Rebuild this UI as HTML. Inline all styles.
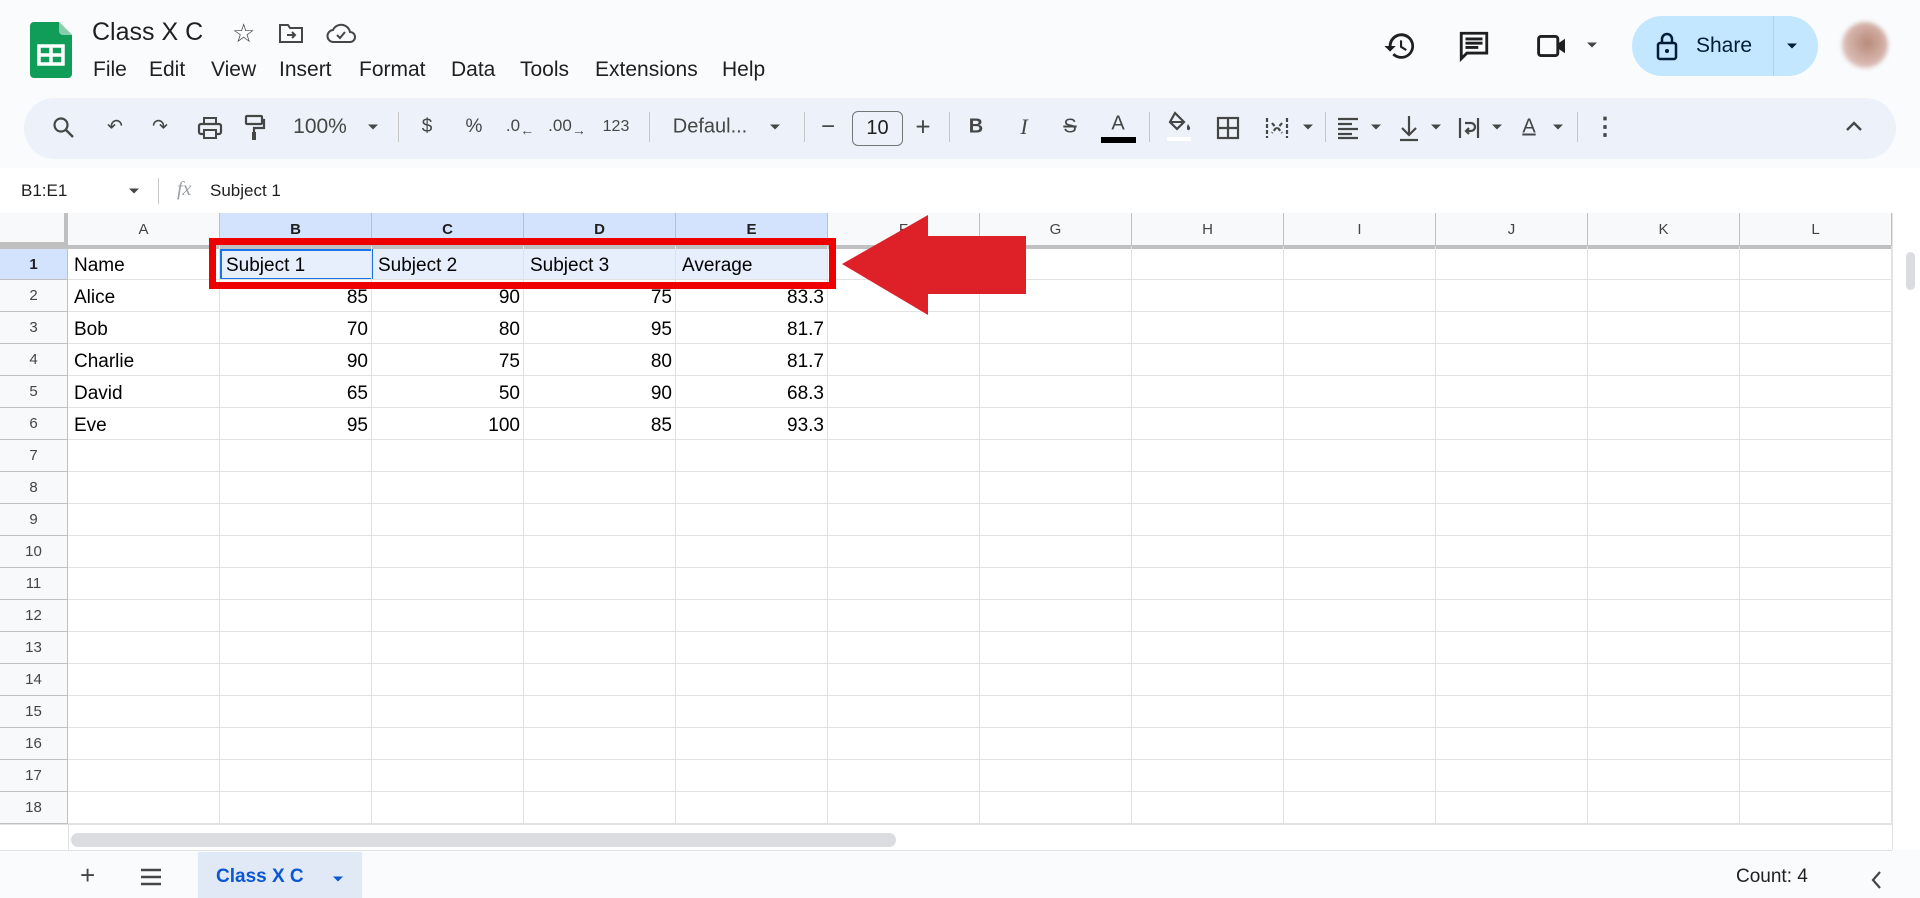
<!DOCTYPE html>
<html><head><meta charset="utf-8"><style>
*{margin:0;padding:0;box-sizing:border-box}
body{width:1920px;height:898px;overflow:hidden;background:#f9fbfd;font-family:"Liberation Sans",Arial,sans-serif;color:#1f1f1f;position:relative}
.a{position:absolute}
.m{position:absolute;top:58px;font-size:21px;color:#1f1f1f}
.ti{position:absolute;top:127px;transform:translate(-50%,-50%);font-size:19px;color:#444746;white-space:nowrap}
.dd{position:absolute;top:127px;transform:translate(-50%,-50%);width:0;height:0;border-left:5px solid transparent;border-right:5px solid transparent;border-top:5px solid #444746}
.sep{position:absolute;top:112px;width:1px;height:30px;background:#c7c7c7}
.ch{position:absolute;top:213px;height:33px;border-right:1px solid #c0c0c0;border-bottom:1px solid #c0c0c0;font-size:15px;color:#444;text-align:center;line-height:33px;background:#f8f9fa}
.rh{position:absolute;left:0;width:68px;border-bottom:1px solid #c0c0c0;border-right:1px solid #c0c0c0;font-size:15px;color:#444;text-align:center;background:#f8f9fa}
.hl{position:absolute;left:68px;width:1824px;height:1px;background:#e2e2e2}
.vl{position:absolute;top:246px;height:578px;width:1px;background:#e2e2e2}
.c{position:absolute;font-size:19px;color:#000;white-space:nowrap}
.r{text-align:right;width:146px}
</style></head><body>
<div class="a" style="left:0;top:0;width:1920px;height:168px;background:#f9fbfd"></div>
<svg class="a" style="left:30px;top:22px" width="42" height="56" viewBox="0 0 42 56"><path d="M4 0h25l13 13v39a4 4 0 0 1-4 4H4a4 4 0 0 1-4-4V4a4 4 0 0 1 4-4z" fill="#0f9d58"/><path d="M29 0l13 13H33a4 4 0 0 1-4-4z" fill="#87ceac"/><rect x="9" y="24" width="24" height="18" fill="none" stroke="#fff" stroke-width="3.5"/><path d="M21 24v18M9 33h24" stroke="#fff" stroke-width="3.5"/></svg>
<div class="a" style="left:92px;top:18px;font-size:25px;color:#1f1f1f">Class X C</div>
<div class="a" style="left:232px;top:18px;font-size:26px;color:#444746">☆</div>
<svg class="a" style="left:278px;top:22px" width="26" height="22" viewBox="0 0 26 22"><path d="M2 3h8l2 3h12v14H2z" fill="none" stroke="#444746" stroke-width="2"/><path d="M9 13h8M14 10l3 3-3 3" fill="none" stroke="#444746" stroke-width="2"/></svg>
<svg class="a" style="left:326px;top:22px" width="30" height="22" viewBox="0 0 30 22"><path d="M8 20a6 6 0 0 1-1-12 9 9 0 0 1 17 2 5 5 0 0 1 0 10z" fill="none" stroke="#444746" stroke-width="2"/><path d="M11 13l3 3 5-6" fill="none" stroke="#444746" stroke-width="2"/></svg>
<div class="m" style="left:93px">File</div>
<div class="m" style="left:149px">Edit</div>
<div class="m" style="left:211px">View</div>
<div class="m" style="left:279px">Insert</div>
<div class="m" style="left:359px">Format</div>
<div class="m" style="left:451px">Data</div>
<div class="m" style="left:520px">Tools</div>
<div class="m" style="left:595px">Extensions</div>
<div class="m" style="left:722px">Help</div>
<svg class="a" style="left:1383px;top:29px" width="34" height="34" viewBox="0 0 24 24"><path d="M13 3a9 9 0 0 0-9 9H1l4 4 4-4H6a7 7 0 1 1 2 5l-1.4 1.4A9 9 0 1 0 13 3zm-1 5v5l4 2.5.8-1.3-3.3-2V8z" fill="#1f1f1f"/></svg>
<svg class="a" style="left:1457px;top:29px" width="34" height="34" viewBox="0 0 24 24"><path d="M3 3h18v14H7l-4 4zM6 7h12M6 10h12M6 13h9" fill="none" stroke="#1f1f1f" stroke-width="2"/></svg>
<svg class="a" style="left:1535px;top:31px" width="36" height="30" viewBox="0 0 30 24"><rect x="3" y="4" width="16" height="16" rx="2" fill="none" stroke="#1f1f1f" stroke-width="2.4"/><path d="M19 10l6-4v12l-6-4z" fill="#1f1f1f"/></svg>
<div class="dd" style="left:1592px;top:45px"></div>
<div class="a" style="left:1632px;top:16px;width:186px;height:60px;border-radius:30px;background:#c2e7ff"></div>
<div class="a" style="left:1773px;top:16px;width:1px;height:60px;background:#a8d4f2"></div>
<svg class="a" style="left:1656px;top:31px" width="22" height="30" viewBox="0 0 22 30"><rect x="2" y="12" width="18" height="16" rx="2" fill="none" stroke="#001d35" stroke-width="2.5"/><path d="M6 12V8a5 5 0 0 1 10 0v4" fill="none" stroke="#001d35" stroke-width="2.5"/><circle cx="11" cy="20" r="2" fill="#001d35"/></svg>
<div class="a" style="left:1696px;top:34px;font-size:21px;color:#001d35">Share</div>
<div class="dd" style="left:1792px;top:46px;border-top-color:#001d35"></div>
<div class="a" style="left:1842px;top:22px;width:46px;height:46px;border-radius:50%;background:radial-gradient(circle at 55% 45%,#b88a78,#d8b8b0 60%,#f0e6e6);filter:blur(2px)"></div>
<div class="a" style="left:24px;top:98px;width:1872px;height:61px;border-radius:31px;background:#edf2fa"></div>
<svg class="a" style="left:52px;top:116px" width="24" height="24" viewBox="0 0 24 24"><circle cx="9" cy="9" r="6.5" fill="none" stroke="#444746" stroke-width="2.2"/><path d="M14 14l7 7" stroke="#444746" stroke-width="2.4"/></svg>
<div class="ti" style="left:115px">↶</div>
<div class="ti" style="left:160px">↷</div>
<svg class="a" style="left:197px;top:116px" width="26" height="24" viewBox="0 0 26 24"><rect x="2" y="8" width="22" height="10" rx="2" fill="none" stroke="#444746" stroke-width="2.2"/><rect x="7" y="2" width="12" height="6" fill="none" stroke="#444746" stroke-width="2"/><rect x="7" y="14" width="12" height="8" fill="#edf2fa" stroke="#444746" stroke-width="2"/></svg>
<svg class="a" style="left:244px;top:114px" width="22" height="28" viewBox="0 0 22 28"><rect x="2" y="2" width="16" height="8" rx="1" fill="none" stroke="#444746" stroke-width="2.2"/><path d="M18 6h2v8H10v4" fill="none" stroke="#444746" stroke-width="2.2"/><rect x="8" y="18" width="4" height="8" fill="#444746"/></svg>
<div class="ti" style="left:320px;font-size:21px">100%</div>
<div class="dd" style="left:373px"></div>
<div class="sep" style="left:398px"></div>
<div class="ti" style="left:427px">$</div>
<div class="ti" style="left:474px">%</div>
<div class="ti" style="left:520px;font-size:17px">.0<sub style="font-size:14px">←</sub></div>
<div class="ti" style="left:567px;font-size:17px">.00<sub style="font-size:14px">→</sub></div>
<div class="ti" style="left:616px;font-size:16px">123</div>
<div class="sep" style="left:649px"></div>
<div class="ti" style="left:710px;font-size:20px">Defaul...</div>
<div class="dd" style="left:775px"></div>
<div class="sep" style="left:804px"></div>
<div class="ti" style="left:828px;font-size:24px">−</div>
<div class="a" style="left:852px;top:111px;width:51px;height:35px;border:1px solid #747775;border-radius:6px;font-size:20px;text-align:center;line-height:33px;color:#1f1f1f">10</div>
<div class="ti" style="left:923px;font-size:26px">+</div>
<div class="sep" style="left:949px"></div>
<div class="ti" style="left:976px;font-weight:bold;font-size:20px">B</div>
<div class="ti" style="left:1024px;font-style:italic;font-family:'Liberation Serif',serif;font-size:22px">I</div>
<div class="ti" style="left:1070px;text-decoration:line-through;font-size:20px">S</div>
<div class="ti" style="left:1118px;top:124px;font-size:20px">A</div>
<div class="a" style="left:1101px;top:137px;width:35px;height:6px;background:#000"></div>
<div class="sep" style="left:1149px"></div>
<svg class="a" style="left:1165px;top:110px" width="28" height="32" viewBox="0 0 28 32"><path d="M10 3l9 9-7 7-7-7z" fill="none" stroke="#444746" stroke-width="2.2"/><path d="M5 12h14" stroke="#444746" stroke-width="2"/><path d="M23 14c2 3 3 5 1 6s-3-2-1-6z" fill="#444746"/><rect x="2" y="27" width="24" height="4" fill="#fff"/></svg>
<svg class="a" style="left:1216px;top:116px" width="24" height="24" viewBox="0 0 24 24"><rect x="2" y="2" width="20" height="20" fill="none" stroke="#444746" stroke-width="2.2"/><path d="M12 2v20M2 12h20" stroke="#444746" stroke-width="2.2"/></svg>
<svg class="a" style="left:1264px;top:115px" width="26" height="26" viewBox="0 0 26 26"><path d="M3 3v20M23 3v20M8 8l4 5-4 5M18 8l-4 5 4 5" fill="none" stroke="#444746" stroke-width="2.2" stroke-dasharray="4 2"/></svg>
<div class="dd" style="left:1308px"></div>
<div class="sep" style="left:1325px"></div>
<svg class="a" style="left:1337px;top:116px" width="22" height="24" viewBox="0 0 22 24"><path d="M1 3h20M1 8h14M1 13h20M1 18h14M1 22h20" stroke="#444746" stroke-width="2.2"/></svg>
<div class="dd" style="left:1376px"></div>
<svg class="a" style="left:1398px;top:114px" width="22" height="28" viewBox="0 0 22 28"><path d="M11 2v19M4 14l7 7 7-7M2 26h18" fill="none" stroke="#444746" stroke-width="2.2"/></svg>
<div class="dd" style="left:1436px"></div>
<svg class="a" style="left:1457px;top:115px" width="24" height="26" viewBox="0 0 24 26"><path d="M3 3v20M21 3v20M8 8h6a4 4 0 0 1 0 8H9m3-3l-3 3 3 3" fill="none" stroke="#444746" stroke-width="2.2"/></svg>
<div class="dd" style="left:1497px"></div>
<div class="ti" style="left:1529px;font-size:20px;text-decoration:underline">A</div>
<div class="dd" style="left:1558px"></div>
<div class="sep" style="left:1577px"></div>
<div class="ti" style="left:1605px;font-size:24px;font-weight:bold">⋮</div>
<svg class="a" style="left:1845px;top:120px" width="18" height="12" viewBox="0 0 18 12"><path d="M2 10l7-7 7 7" fill="none" stroke="#444746" stroke-width="2.4"/></svg>
<div class="a" style="left:0;top:168px;width:1920px;height:45px;background:#fff"></div>
<div class="a" style="left:21px;top:181px;font-size:17px">B1:E1</div>
<div class="dd" style="left:134px;top:191px"></div>
<div class="a" style="left:158px;top:178px;width:1px;height:26px;background:#c7c7c7"></div>
<div class="a" style="left:177px;top:178px;font-size:20px;font-style:italic;font-family:'Liberation Serif',serif;color:#9aa0a6">fx</div>
<div class="a" style="left:210px;top:181px;font-size:17px">Subject 1</div>
<div class="a" style="left:0;top:213px;width:1904px;height:611px;background:#fff"></div>
<div class="a" style="left:0;top:213px;width:68px;height:33px;background:#f8f9fa;border-right:4px solid #c0c0c0;border-bottom:4px solid #c0c0c0"></div>
<div class="ch" style="left:68px;width:152px">A</div>
<div class="ch" style="left:220px;width:152px;background:#d3e3fd;font-weight:bold;color:#1f1f1f">B</div>
<div class="ch" style="left:372px;width:152px;background:#d3e3fd;font-weight:bold;color:#1f1f1f">C</div>
<div class="ch" style="left:524px;width:152px;background:#d3e3fd;font-weight:bold;color:#1f1f1f">D</div>
<div class="ch" style="left:676px;width:152px;background:#d3e3fd;font-weight:bold;color:#1f1f1f">E</div>
<div class="ch" style="left:828px;width:152px">F</div>
<div class="ch" style="left:980px;width:152px">G</div>
<div class="ch" style="left:1132px;width:152px">H</div>
<div class="ch" style="left:1284px;width:152px">I</div>
<div class="ch" style="left:1436px;width:152px">J</div>
<div class="ch" style="left:1588px;width:152px">K</div>
<div class="ch" style="left:1740px;width:152px">L</div>
<div class="a" style="left:0;top:246px;width:1892px;height:3px;background:#c0c0c0"></div>
<div class="a" style="left:220px;top:249px;width:608px;height:31px;background:#e7eefc"></div>
<div class="a" style="left:220px;top:249px;width:153px;height:31px;border:2px solid #1a73e8"></div>
<div class="rh" style="top:249px;height:31px;line-height:31px;background:#d3e3fd;font-weight:bold;color:#1f1f1f">1</div>
<div class="rh" style="top:280px;height:32px;line-height:32px">2</div>
<div class="rh" style="top:312px;height:32px;line-height:32px">3</div>
<div class="rh" style="top:344px;height:32px;line-height:32px">4</div>
<div class="rh" style="top:376px;height:32px;line-height:32px">5</div>
<div class="rh" style="top:408px;height:32px;line-height:32px">6</div>
<div class="rh" style="top:440px;height:32px;line-height:32px">7</div>
<div class="rh" style="top:472px;height:32px;line-height:32px">8</div>
<div class="rh" style="top:504px;height:32px;line-height:32px">9</div>
<div class="rh" style="top:536px;height:32px;line-height:32px">10</div>
<div class="rh" style="top:568px;height:32px;line-height:32px">11</div>
<div class="rh" style="top:600px;height:32px;line-height:32px">12</div>
<div class="rh" style="top:632px;height:32px;line-height:32px">13</div>
<div class="rh" style="top:664px;height:32px;line-height:32px">14</div>
<div class="rh" style="top:696px;height:32px;line-height:32px">15</div>
<div class="rh" style="top:728px;height:32px;line-height:32px">16</div>
<div class="rh" style="top:760px;height:32px;line-height:32px">17</div>
<div class="rh" style="top:792px;height:32px;line-height:32px">18</div>
<div class="hl" style="top:279px"></div><div class="hl" style="top:311px"></div><div class="hl" style="top:343px"></div><div class="hl" style="top:375px"></div><div class="hl" style="top:407px"></div><div class="hl" style="top:439px"></div><div class="hl" style="top:471px"></div><div class="hl" style="top:503px"></div><div class="hl" style="top:535px"></div><div class="hl" style="top:567px"></div><div class="hl" style="top:599px"></div><div class="hl" style="top:631px"></div><div class="hl" style="top:663px"></div><div class="hl" style="top:695px"></div><div class="hl" style="top:727px"></div><div class="hl" style="top:759px"></div><div class="hl" style="top:791px"></div><div class="hl" style="top:823px"></div>
<div class="vl" style="left:219px"></div><div class="vl" style="left:371px"></div><div class="vl" style="left:523px"></div><div class="vl" style="left:675px"></div><div class="vl" style="left:827px"></div><div class="vl" style="left:979px"></div><div class="vl" style="left:1131px"></div><div class="vl" style="left:1283px"></div><div class="vl" style="left:1435px"></div><div class="vl" style="left:1587px"></div><div class="vl" style="left:1739px"></div><div class="vl" style="left:1891px"></div>
<div class="c" style="left:74px;top:255px">Name</div>
<div class="c" style="left:226px;top:255px">Subject 1</div>
<div class="c" style="left:378px;top:255px">Subject 2</div>
<div class="c" style="left:530px;top:255px">Subject 3</div>
<div class="c" style="left:682px;top:255px">Average</div>
<div class="c" style="left:74px;top:287px">Alice</div><div class="c r" style="left:222px;top:287px">85</div><div class="c r" style="left:374px;top:287px">90</div><div class="c r" style="left:526px;top:287px">75</div><div class="c r" style="left:678px;top:287px">83.3</div>
<div class="c" style="left:74px;top:319px">Bob</div><div class="c r" style="left:222px;top:319px">70</div><div class="c r" style="left:374px;top:319px">80</div><div class="c r" style="left:526px;top:319px">95</div><div class="c r" style="left:678px;top:319px">81.7</div>
<div class="c" style="left:74px;top:351px">Charlie</div><div class="c r" style="left:222px;top:351px">90</div><div class="c r" style="left:374px;top:351px">75</div><div class="c r" style="left:526px;top:351px">80</div><div class="c r" style="left:678px;top:351px">81.7</div>
<div class="c" style="left:74px;top:383px">David</div><div class="c r" style="left:222px;top:383px">65</div><div class="c r" style="left:374px;top:383px">50</div><div class="c r" style="left:526px;top:383px">90</div><div class="c r" style="left:678px;top:383px">68.3</div>
<div class="c" style="left:74px;top:415px">Eve</div><div class="c r" style="left:222px;top:415px">95</div><div class="c r" style="left:374px;top:415px">100</div><div class="c r" style="left:526px;top:415px">85</div><div class="c r" style="left:678px;top:415px">93.3</div>
<div class="a" style="left:209px;top:238px;width:627px;height:51px;border:7px solid #ee0000"></div>
<svg class="a" style="left:838px;top:212px" width="192" height="104" viewBox="0 0 192 104"><path d="M4 52L90 3v21h98v58H90v21z" fill="#de2128"/></svg>
<div class="a" style="left:1892px;top:213px;width:28px;height:637px;background:#fff;border-left:1px solid #e2e2e2"></div>
<div class="a" style="left:1906px;top:252px;width:9px;height:38px;border-radius:5px;background:#dadce0"></div>
<div class="a" style="left:0;top:824px;width:1892px;height:27px;background:#fff;border-top:1px solid #e2e2e2;border-bottom:1px solid #e2e2e2"></div>
<div class="a" style="left:68px;top:824px;width:1px;height:27px;background:#e2e2e2"></div>
<div class="a" style="left:71px;top:833px;width:825px;height:14px;border-radius:7px;background:#dadce0"></div>
<div class="a" style="left:80px;top:860px;font-size:26px;color:#444746">+</div>
<svg class="a" style="left:140px;top:868px" width="22" height="18" viewBox="0 0 22 18"><path d="M1 2h20M1 9h20M1 16h20" stroke="#444746" stroke-width="2.4"/></svg>
<div class="a" style="left:198px;top:852px;width:164px;height:46px;background:#e1e9f7"></div>
<div class="a" style="left:216px;top:866px;font-size:19px;font-weight:bold;color:#0b57d0">Class X C</div>
<div class="dd" style="left:338px;top:879px;border-top-color:#0b57d0"></div>
<div class="a" style="left:1736px;top:866px;font-size:19px;color:#1f1f1f">Count: 4</div>
<svg class="a" style="left:1870px;top:870px" width="12" height="20" viewBox="0 0 12 20"><path d="M10 2L3 10l7 8" fill="none" stroke="#444746" stroke-width="2.2"/></svg>
</body></html>
